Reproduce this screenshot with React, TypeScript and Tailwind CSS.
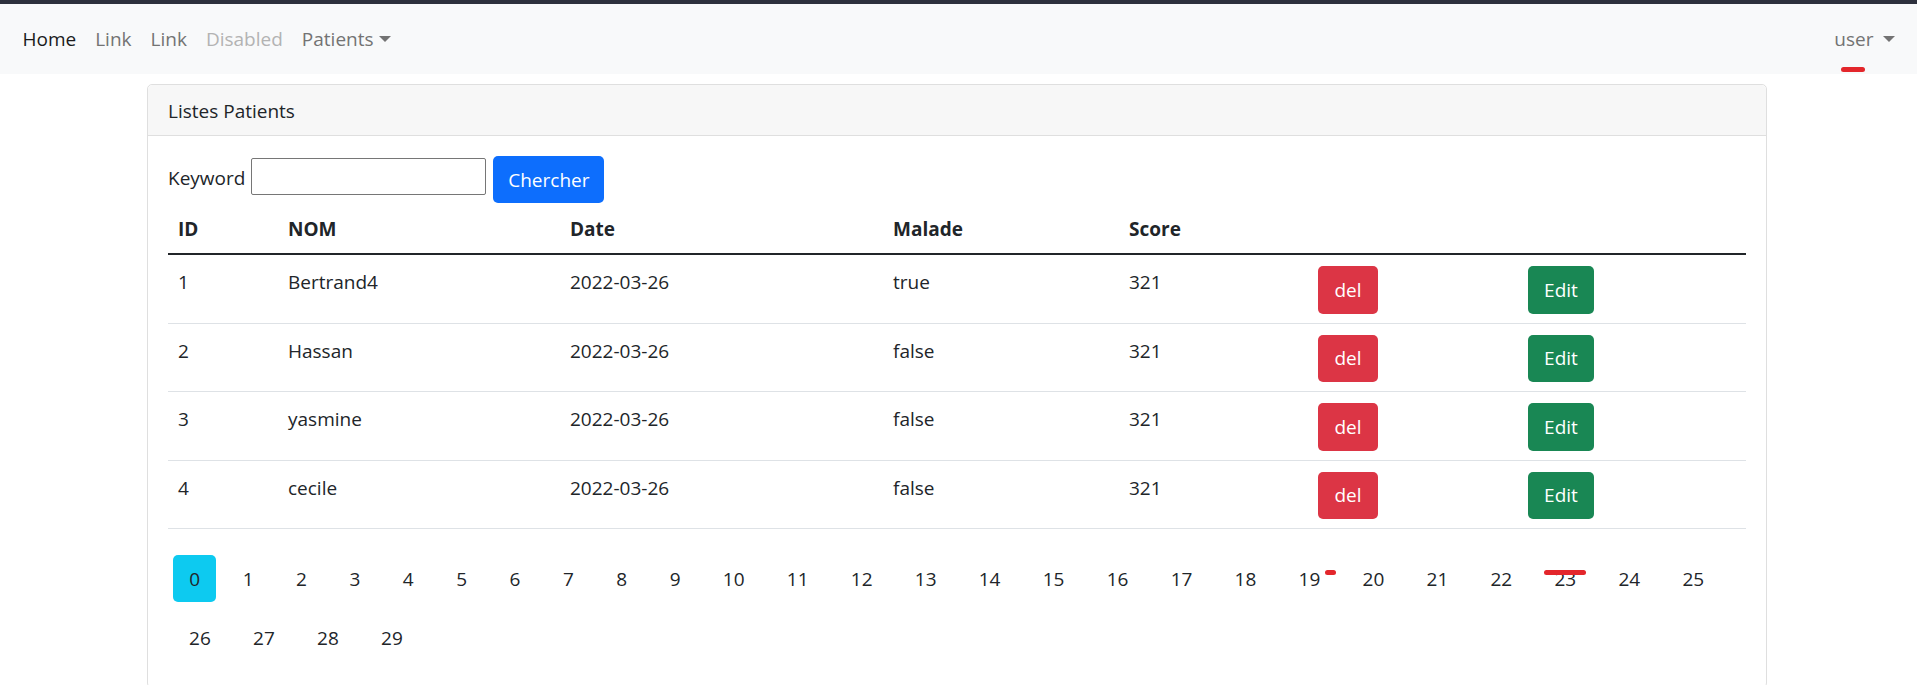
import React from 'react';

type Patient = { id: number; nom: string; date: string; malade: boolean; score: number };

const patients: Patient[] = [
  { id: 1, nom: 'Bertrand4', date: '2022-03-26', malade: true, score: 321 },
  { id: 2, nom: 'Hassan', date: '2022-03-26', malade: false, score: 321 },
  { id: 3, nom: 'yasmine', date: '2022-03-26', malade: false, score: 321 },
  { id: 4, nom: 'cecile', date: '2022-03-26', malade: false, score: 321 },
];

const pages = Array.from({ length: 30 }, (_, i) => i);

const cols = 'grid grid-cols-[110px_282px_323px_236px_189px_210px_1fr]';

function Caret({ gap = 'ml-[5px]' }: { gap?: string }) {
  return (
    <span
      className={`inline-block w-0 h-0 ${gap} align-[0.2em] border-t-[6px] border-x-[6px] border-t-current border-x-transparent`}
    />
  );
}

export default function App() {
  const currentPage = 0;

  return (
    <div className="relative min-h-[685px] bg-white text-[#212529] text-[19px] leading-[30px] font-['Segoe_UI','Open_Sans',sans-serif]">
      {/* navbar */}
      <div className="border-t-4 border-[#2d303d] bg-[#f8f9fa]">
        <div className="flex h-[70px] items-center justify-between px-[12.5px]">
          <div className="flex items-center">
            <a className="px-[10px] text-[#1a1a1a]">Home</a>
            <a className="pl-[9px] pr-[10px] text-[#737373]">Link</a>
            <a className="pl-[9px] pr-[10px] text-[#737373]">Link</a>
            <a className="pl-[9px] pr-[10px] text-[#b3b3b3]">Disabled</a>
            <a className="pl-[9px] pr-[10px] text-[#737373]">
              Patients
              <Caret />
            </a>
          </div>
          <a className="px-[10px] text-[#737373]">
            user
            <Caret gap="ml-[9px]" />
          </a>
        </div>
      </div>

      {/* card */}
      <div className="ml-[147px] mt-[10px] w-[1620px] rounded-[5px] border border-[#dfdfdf]">
        <div className="rounded-t-[5px] border-b border-[#dfdfdf] bg-[#f7f7f7] px-[20px] pt-[11px] pb-[9px]">
          Listes Patients
        </div>
        <div className="p-[20px]">
          <form className="flex items-start" onSubmit={(e) => e.preventDefault()}>
            <label className="mt-[7px]">Keyword</label>
            <input
              type="text"
              className="ml-[6px] mt-[2px] h-[37px] w-[235px] rounded-[2px] border border-[#767676] bg-white px-[2px] outline-none"
            />
            <button
              type="submit"
              className="ml-[7px] h-[47px] w-[111px] rounded-[5px] bg-[#0d6efd] text-white"
            >
              Chercher
            </button>
          </form>

          {/* table */}
          <div className="mb-[20px]">
            <div className={`${cols} border-b-[2.5px] border-[#212529] font-bold`}>
              <div className="px-[10px] pt-[11px] pb-[9px]">ID</div>
              <div className="px-[10px] pt-[11px] pb-[9px]">NOM</div>
              <div className="px-[10px] pt-[11px] pb-[9px]">Date</div>
              <div className="px-[10px] pt-[11px] pb-[9px]">Malade</div>
              <div className="px-[10px] pt-[11px] pb-[9px]">Score</div>
              <div className="px-[10px] pt-[11px] pb-[9px]"></div>
              <div className="px-[10px] pt-[11px] pb-[9px]"></div>
            </div>
            {patients.map((p) => (
              <div key={p.id} className={`${cols} border-b-[1.25px] border-[#dee2e6]`}>
                <div className="px-[10px] pt-[12px]">{p.id}</div>
                <div className="px-[10px] pt-[12px]">{p.nom}</div>
                <div className="px-[10px] pt-[12px]">{p.date}</div>
                <div className="px-[10px] pt-[12px]">{String(p.malade)}</div>
                <div className="px-[10px] pt-[12px]">{p.score}</div>
                <div className="p-[10px] pt-[11px] pb-[9px]">
                  <button className="h-[47.5px] w-[60px] rounded-[5px] bg-[#dc3545] text-white">del</button>
                </div>
                <div className="p-[10px] pt-[11px] pb-[9px]">
                  <button className="h-[47.5px] w-[66px] rounded-[5px] bg-[#198754] text-white">Edit</button>
                </div>
              </div>
            ))}
          </div>

          {/* pagination */}
          <ul className="flex flex-wrap">
            {pages.map((p) => (
              <li key={p} className="mx-[5.2px] my-[6px]">
                <button
                  className={`h-[47px] rounded-[5px] ${p < 10 ? 'w-[43px]' : 'w-[53.6px]'} ${
                    p === currentPage ? 'bg-[#0dcaf0]' : 'bg-transparent'
                  }`}
                >
                  {p}
                </button>
              </li>
            ))}
          </ul>
        </div>
      </div>

      {/* red annotation marks */}
      <div className="absolute left-[1841px] top-[67px] h-[5px] w-[24px] rounded-full bg-[#e3262b]" />
      <div className="absolute left-[1325px] top-[570px] h-[5px] w-[11px] rounded-full bg-[#e3262b]" />
      <div className="absolute left-[1544px] top-[570px] h-[5px] w-[42px] rounded-full bg-[#e3262b]" />
    </div>
  );
}
